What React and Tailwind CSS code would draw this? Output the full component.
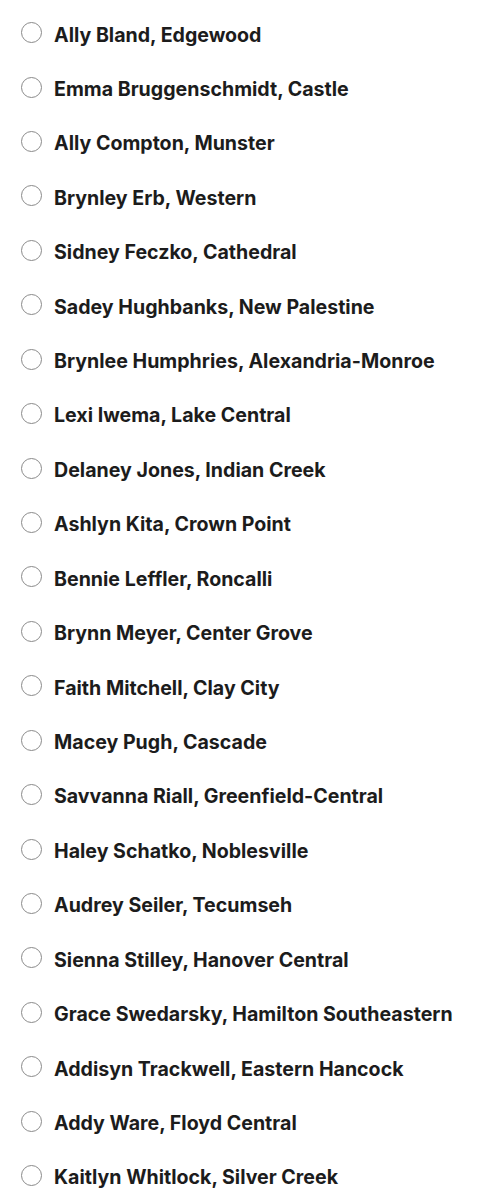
const athletes = [
  'Ally Bland, Edgewood',
  'Emma Bruggenschmidt, Castle',
  'Ally Compton, Munster',
  'Brynley Erb, Western',
  'Sidney Feczko, Cathedral',
  'Sadey Hughbanks, New Palestine',
  'Brynlee Humphries, Alexandria-Monroe',
  'Lexi Iwema, Lake Central',
  'Delaney Jones, Indian Creek',
  'Ashlyn Kita, Crown Point',
  'Bennie Leffler, Roncalli',
  'Brynn Meyer, Center Grove',
  'Faith Mitchell, Clay City',
  'Macey Pugh, Cascade',
  'Savvanna Riall, Greenfield-Central',
  'Haley Schatko, Noblesville',
  'Audrey Seiler, Tecumseh',
  'Sienna Stilley, Hanover Central',
  'Grace Swedarsky, Hamilton Southeastern',
  'Addisyn Trackwell, Eastern Hancock',
  'Addy Ware, Floyd Central',
  'Kaitlyn Whitlock, Silver Creek',
]

export default function App() {
  return (
    <div className="min-h-[1200px] bg-white pt-[8px] font-['Inter',sans-serif]">
      <ul>
        {athletes.map((name) => (
          <li key={name}>
            <label className="flex h-[54.43px] cursor-pointer items-center pl-[21px]">
              {/* radio */}
              <span className="mb-[5px] h-[21px] w-[21px] shrink-0 rounded-full border-[1.5px] border-[#8a8a8a] bg-white" />
              <span className="ml-[12px] text-[19.6px] font-bold text-[#1c1c1c]">{name}</span>
            </label>
          </li>
        ))}
      </ul>
    </div>
  )
}
